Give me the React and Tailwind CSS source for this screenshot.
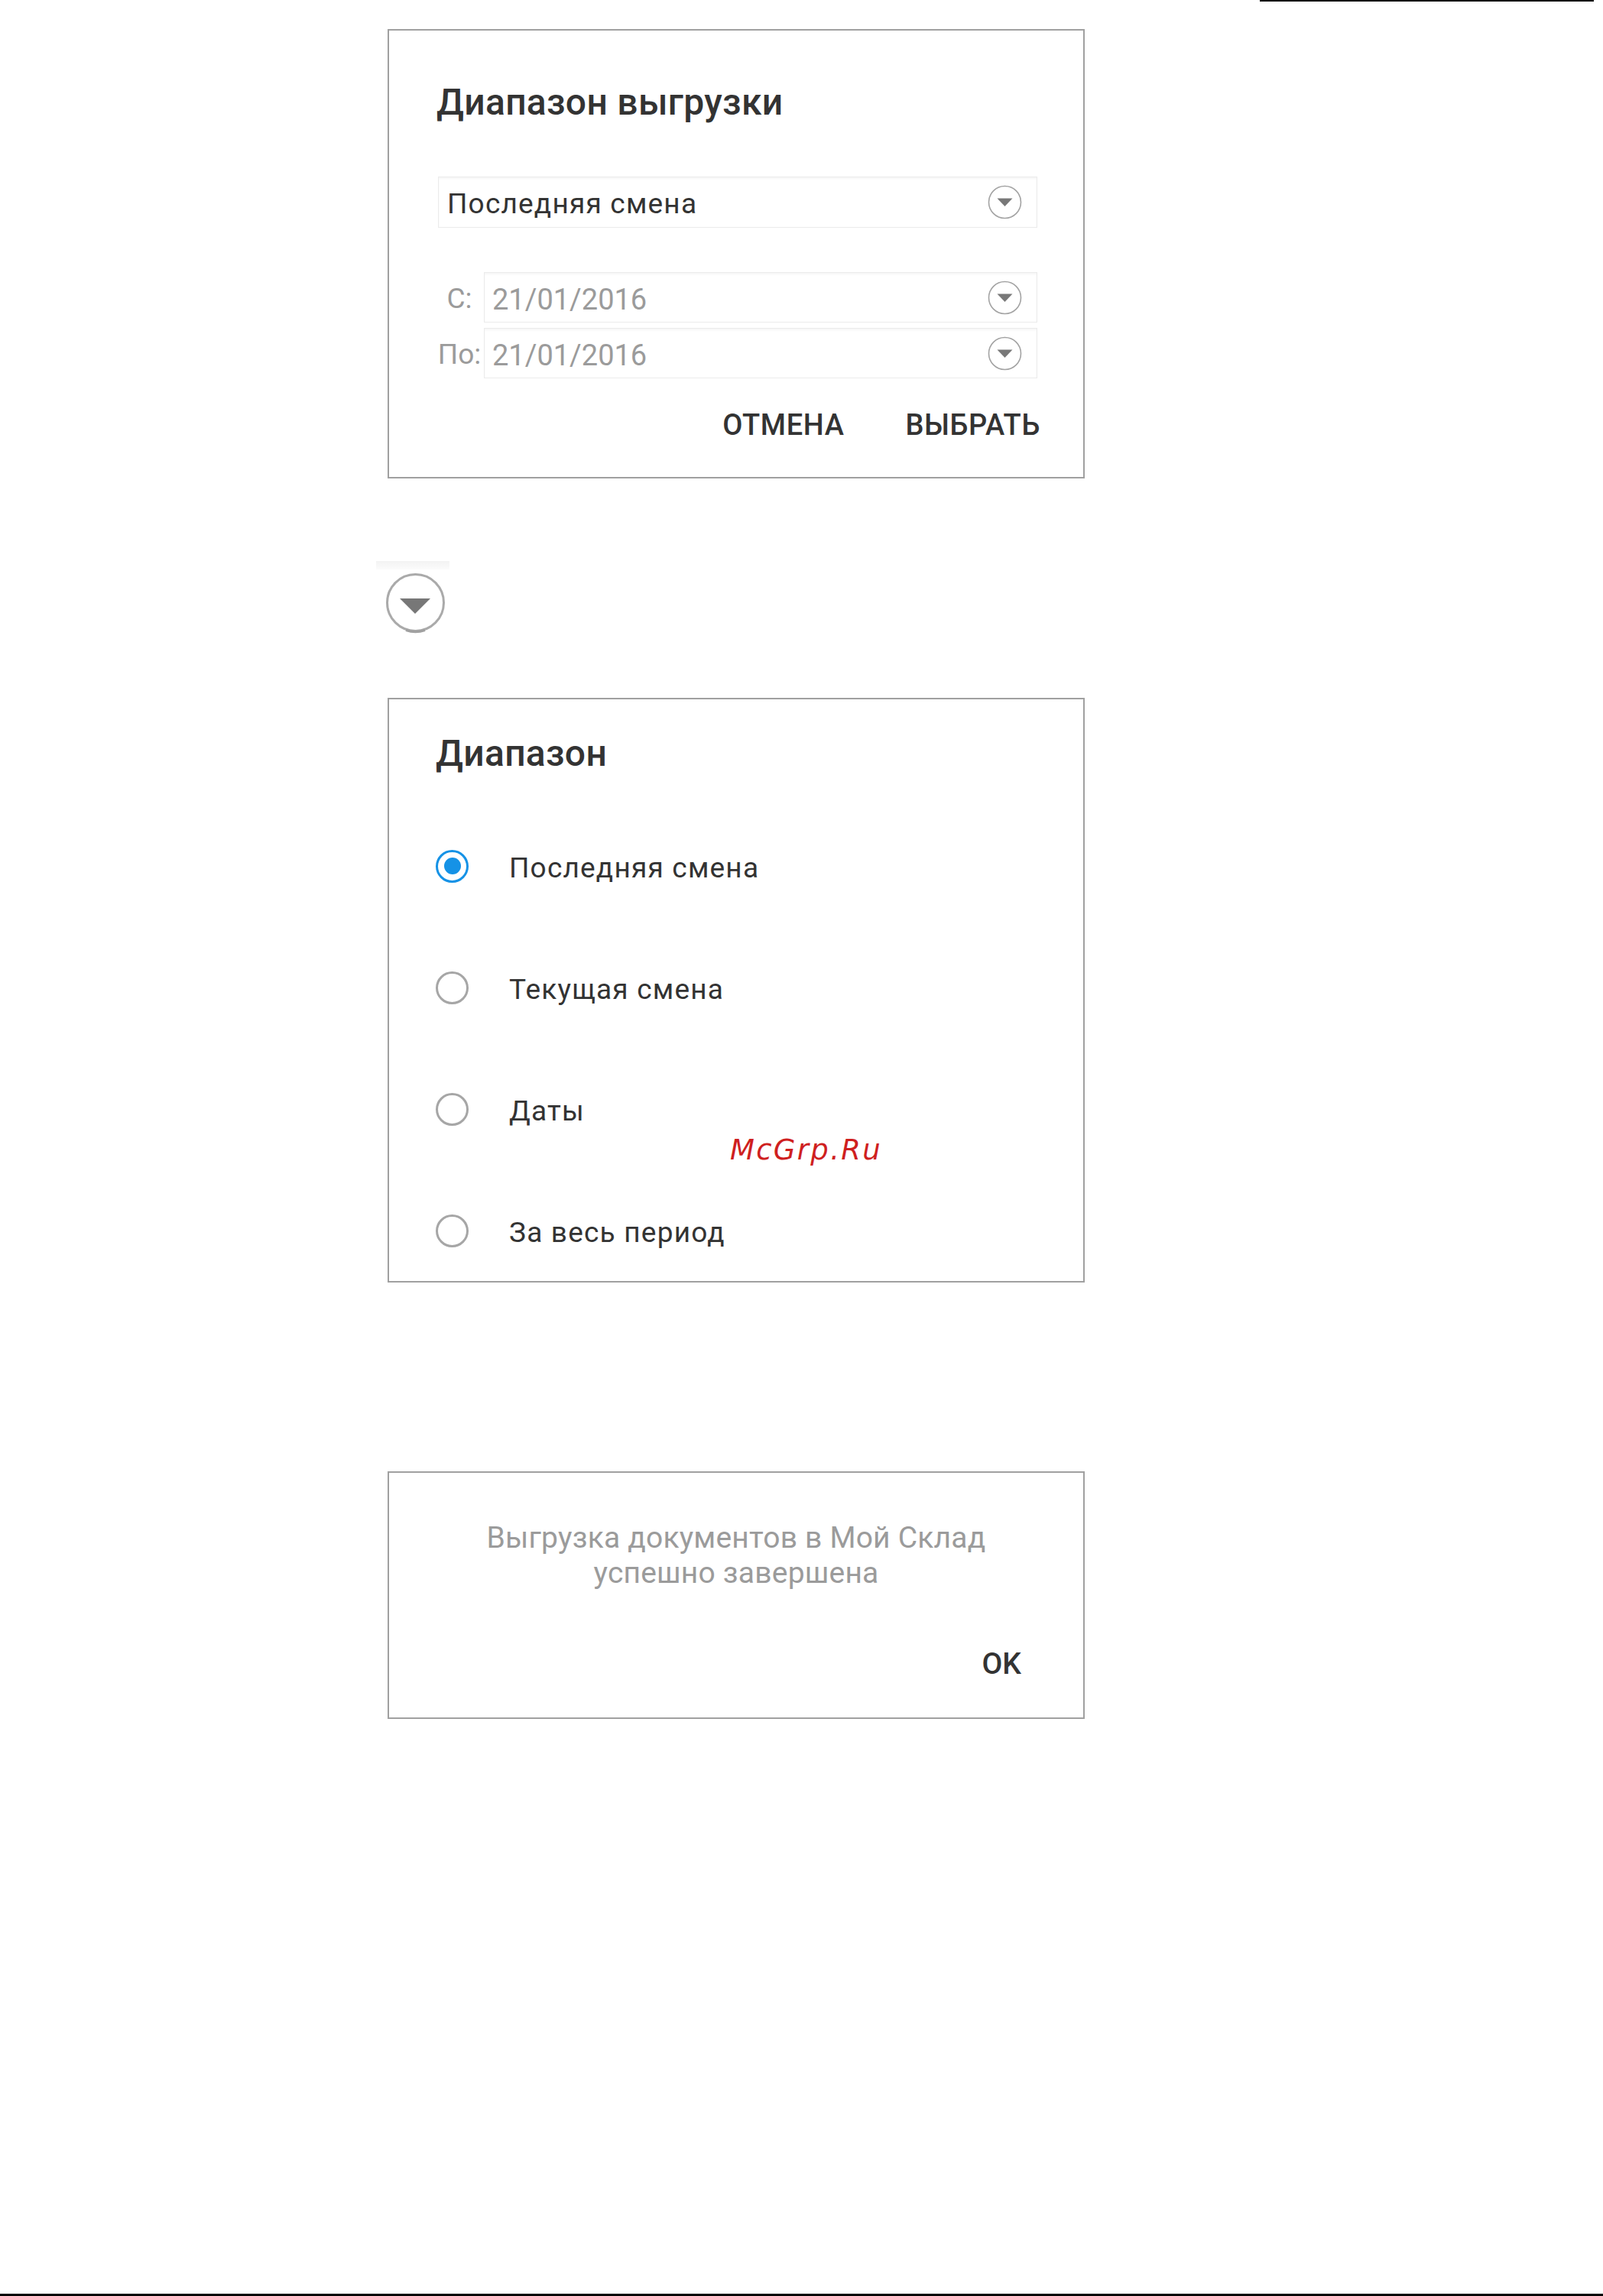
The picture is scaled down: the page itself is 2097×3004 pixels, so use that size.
function DropIcon() {
    return (
        <svg width="45" height="45" viewBox="0 0 45 45" className="shrink-0">
            <circle cx="22.5" cy="22.5" r="21" fill="white" stroke="#a3a3a3" strokeWidth="1.6" />
            <path d="M12.5 17.5 H32.5 L22.5 28 Z" fill="#787878" />
        </svg>
    )
}

function Radio({ checked }) {
    if (checked) {
        return (
            <div className="h-[43px] w-[43px] shrink-0 rounded-full border-[3px] border-[#1592e6] flex items-center justify-center">
                <div className="h-[22px] w-[22px] rounded-full bg-[#1592e6]"></div>
            </div>
        )
    }
    return <div className="h-[43px] w-[43px] shrink-0 rounded-full border-[3px] border-[#a6a6a6]"></div>
}

function DateRow({ label }) {
    return (
        <div className="flex items-center">
            <span className="w-[60px] pt-[3px] text-center text-[37px] text-[#9b9b9b]">{label}</span>
            <div className="ml-[2px] flex h-[66px] flex-1 items-center justify-between border border-[#ebebeb] pl-[10px] pr-[19px] shadow-[inset_0_2px_3px_rgba(0,0,0,0.04)]">
                <span className="pt-[5px] text-[38px] text-[#9b9b9b]">21/01/2016</span>
                <DropIcon />
            </div>
        </div>
    )
}

const options = ["Последняя смена", "Текущая смена", "Даты", "За весь период"]

export default function App() {
    return (
        <div className="flex min-h-[3004px] flex-col bg-white font-['Roboto','Liberation_Sans',sans-serif] leading-none">
            <div className="flex justify-end pr-[12px]">
                <div className="h-[2px] w-[437px] bg-black"></div>
            </div>

            <div className="ml-[507px] flex w-[912px] flex-col">
                {/* export range dialog */}
                <div className="mt-[36px] h-[588px] border-2 border-[#a0a0a0] pl-[62px] pr-[60px] pt-[68px]">
                    <h2 className="text-[48px] leading-[52px] font-medium tracking-[0.3px] text-[#333]">Диапазон выгрузки</h2>
                    <div className="ml-[2px] mt-[71px] flex h-[67px] items-center justify-between border border-[#ebebeb] pl-[11px] pr-[19px] shadow-[inset_0_2px_3px_rgba(0,0,0,0.04)]">
                        <span className="pt-[3px] text-[37px] tracking-[1.2px] text-[#333]">Последняя смена</span>
                        <DropIcon />
                    </div>
                    <div className="mt-[58px] flex flex-col gap-[7px]">
                        <DateRow label="С:" />
                        <DateRow label="По:" />
                    </div>
                    <div className="-mr-[4px] mt-[39px] flex justify-end gap-[80px] text-[38px] leading-[44px] font-medium tracking-[0.6px] text-[#333]">
                        <button>ОТМЕНА</button>
                        <button>ВЫБРАТЬ</button>
                    </div>
                </div>

                {/* separate dropdown icon */}
                <div className="-ml-[15px] mt-[108px]">
                    <svg width="96" height="96" viewBox="0 0 96 96">
                        <defs>
                            <linearGradient id="band" x1="0" y1="0" x2="0" y2="1">
                                <stop offset="0" stopColor="#f3f3f3" />
                                <stop offset="1" stopColor="#fbfbfb" />
                            </linearGradient>
                        </defs>
                        <rect x="0" y="0" width="96" height="11" fill="url(#band)" />
                        <circle cx="51.5" cy="54.5" r="37" fill="white" stroke="#aaaaaa" strokeWidth="3" />
                        <path d="M39 90.5 A37 37 0 0 0 64 90.5" fill="none" stroke="#a0a0a0" strokeWidth="3" />
                        <path d="M31 49 H71 L51 69 Z" fill="#777" />
                    </svg>
                </div>

                {/* range picker dialog */}
                <div className="relative mt-[83px] h-[765px] border-2 border-[#a0a0a0] pl-[61px] pt-[45px]">
                    <h2 className="text-[48px] leading-[52px] font-medium tracking-[0.3px] text-[#333]">Диапазон</h2>
                    <div className="mt-[99px] flex flex-col gap-[115px]">
                        {options.map((o, i) => (
                            <label key={o} className="flex h-[44px] items-center gap-[53px]">
                                <Radio checked={i === 0} />
                                <span className="pt-[5px] text-[37px] tracking-[1.2px] text-[#333]">{o}</span>
                            </label>
                        ))}
                    </div>
                    <span className="absolute left-[446px] top-[571px] font-['DejaVu_Sans',sans-serif] text-[37px] italic tracking-[2.3px] text-[#cf1f1f]">McGrp.Ru</span>
                </div>

                {/* done message */}
                <div className="mt-[247px] h-[324px] border-2 border-[#a0a0a0] pt-[62px]">
                    <p className="text-center text-[39px] leading-[46px] tracking-[0.2px] text-[#9b9b9b]">
                        Выгрузка документов в Мой Склад
                        <br />
                        успешно завершена
                    </p>
                    <div className="mt-[74px] flex justify-end pr-[81px]">
                        <button className="text-[39px] leading-[44px] font-medium text-[#333]">OK</button>
                    </div>
                </div>
            </div>

            <div className="mt-auto h-[3px] bg-black"></div>
        </div>
    )
}
